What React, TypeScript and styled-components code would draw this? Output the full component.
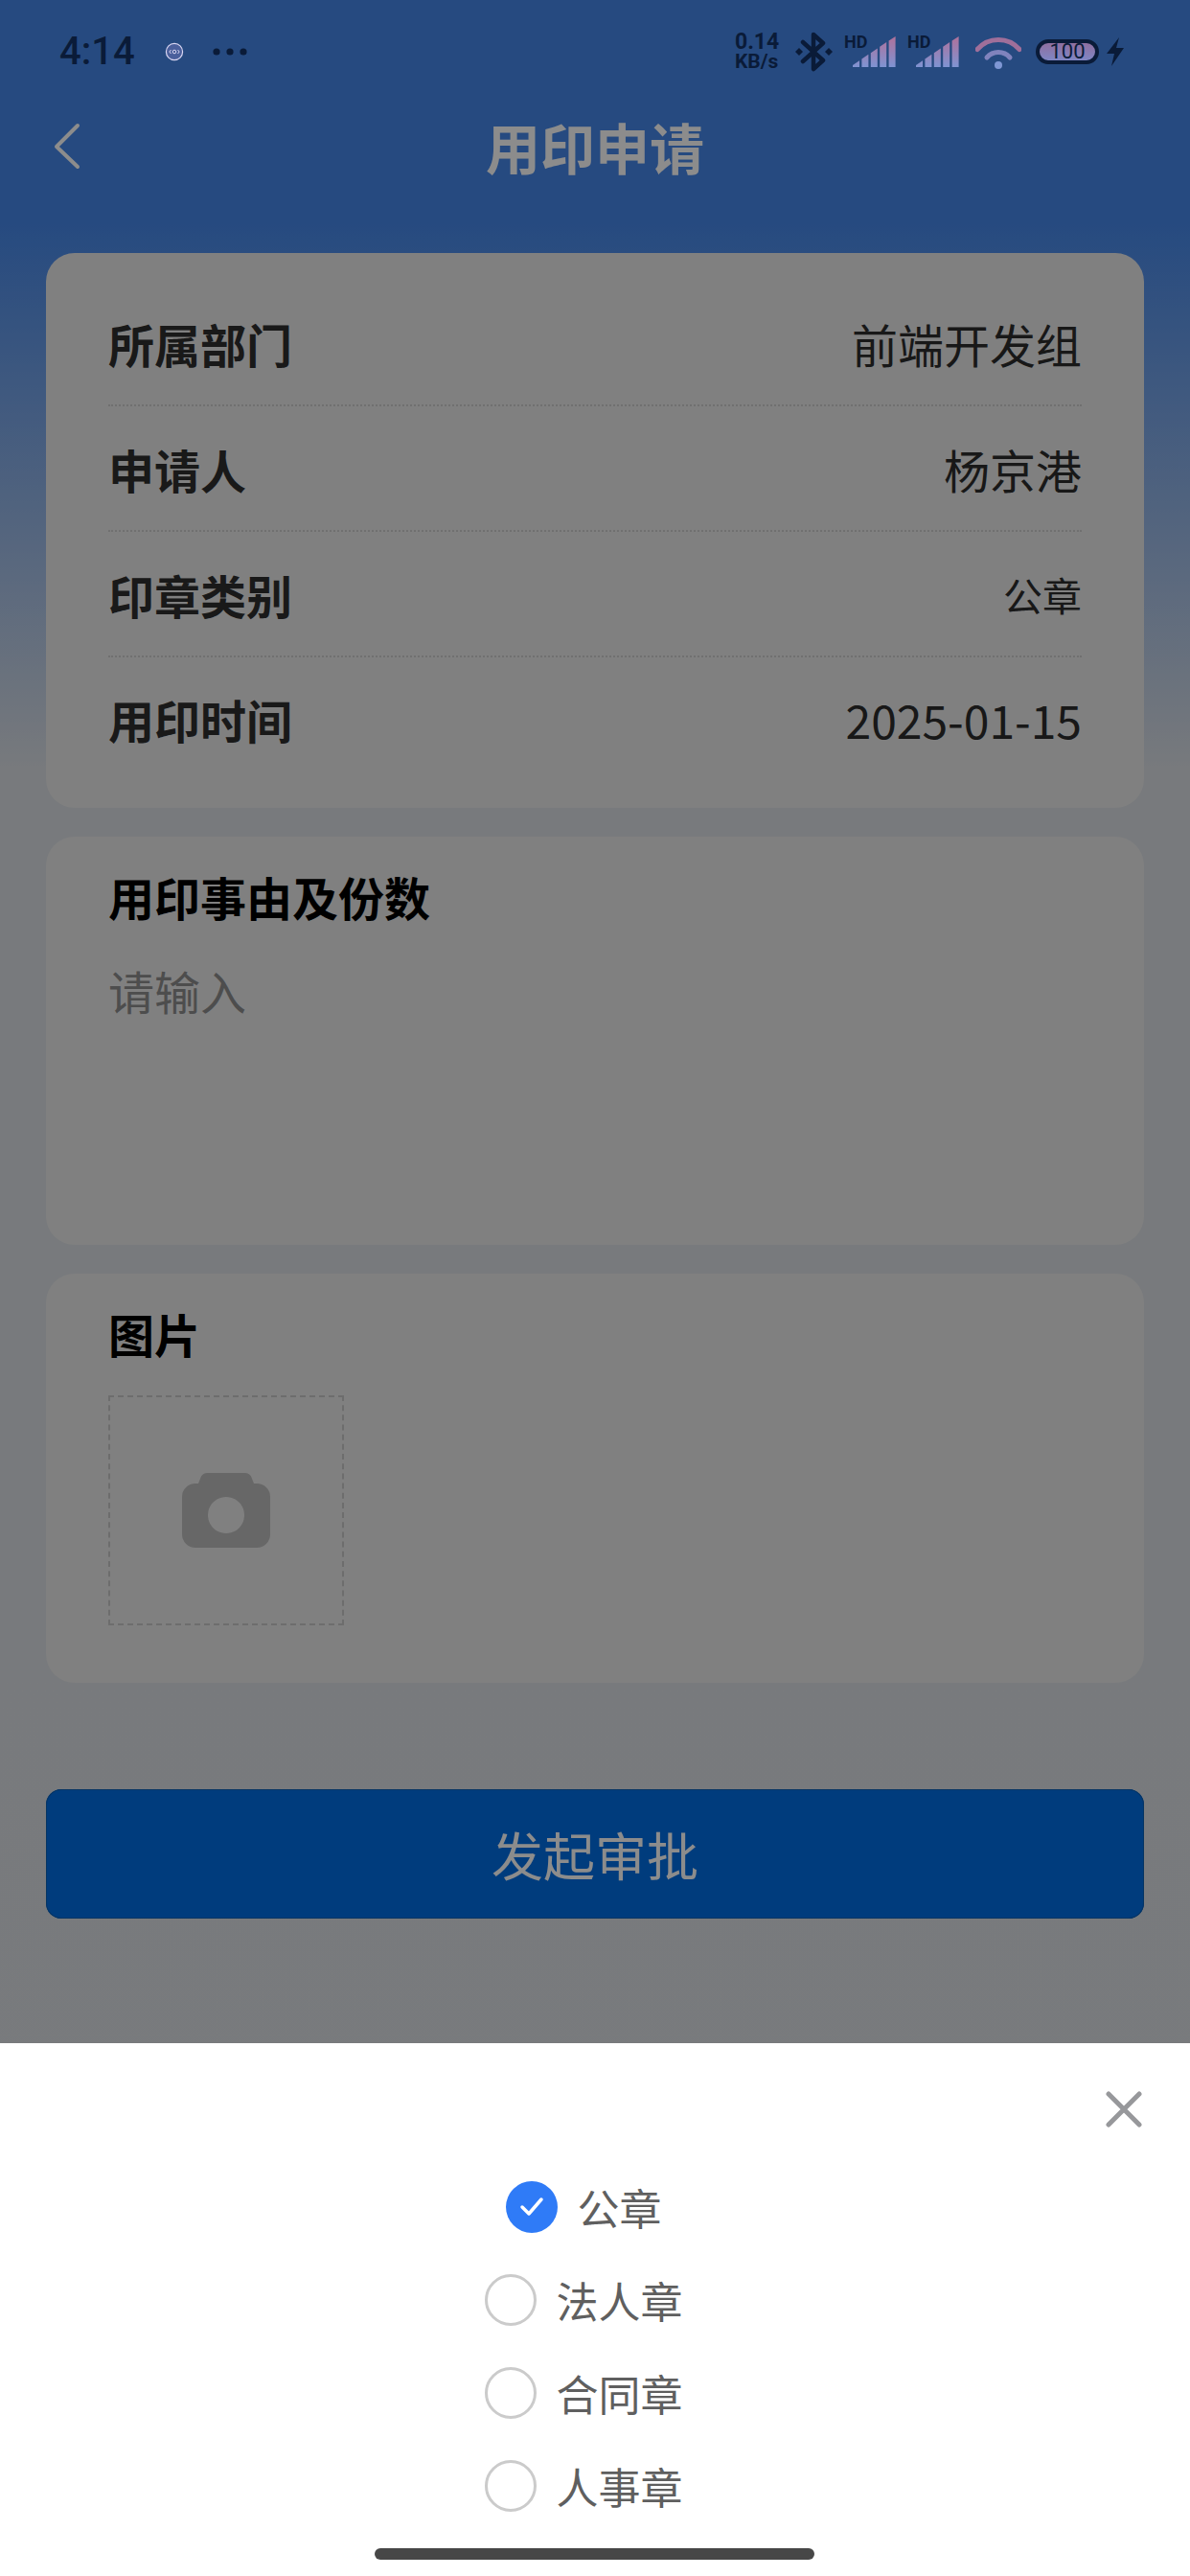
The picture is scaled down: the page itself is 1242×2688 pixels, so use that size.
import React from 'react'
import styled, { createGlobalStyle } from 'styled-components'

const GlobalStyle = createGlobalStyle`
  html, body {
    margin: 0;
    padding: 0;
    background: #dce0e3;
  }
  * {
    box-sizing: border-box;
  }
`

const STATUS_DARK = '#0a1b38'

/* page */
const Page = styled.div`
  position: relative;
  width: 1242px;
  height: 2688px;
  overflow: hidden;
  font-family: "Noto Sans CJK SC", "Noto Sans", sans-serif;
  background: linear-gradient(
    180deg,
    #4587e9 0,
    #4587e9 230px,
    #dadee3 800px,
    #dce0e3 100%
  );
`

const Scrim = styled.div`
  position: absolute;
  inset: 0;
  z-index: 1;
  background: rgba(0, 0, 0, 0.45);
`

/* status bar */
const StatusBar = styled.div`
  position: relative;
  z-index: 2;
  display: flex;
  align-items: center;
  justify-content: space-between;
  height: 108px;
  padding: 0 68px 0 62px;
  color: ${STATUS_DARK};
`

const StatusLeft = styled.div`
  display: flex;
  align-items: center;
`

const Time = styled.span`
  font-family: Roboto, sans-serif;
  font-size: 40px;
  font-weight: 500;
  line-height: 40px;
  margin-right: 31px;
`

const StatusRight = styled.div`
  display: flex;
  align-items: center;
`

const Speed = styled.div`
  display: flex;
  flex-direction: column;
  align-items: flex-start;
  width: 53px;
  margin-right: 10px;
  font-family: Roboto, sans-serif;
  font-weight: 700;
  font-size: 21px;
  line-height: 20px;
`

const SpeedValue = styled.span`
  font-size: 23px;
`

const SignalWrap = styled.span<{ $gap: number }>`
  position: relative;
  display: block;
  width: 54px;
  height: 32px;
  margin-right: ${p => p.$gap}px;
`

const SignalHd = styled.span`
  position: absolute;
  top: -2px;
  left: 0;
  font-family: Roboto, sans-serif;
  font-size: 18px;
  line-height: 16px;
  font-weight: 700;
`

const Battery = styled.span`
  display: flex;
  align-items: center;
  justify-content: center;
  width: 66px;
  height: 26px;
  margin: 0 7px 0 15px;
  border: 4px solid ${STATUS_DARK};
  border-radius: 13px;
  background: linear-gradient(180deg, #8f6f9f, #7f86c4);
  font-family: Roboto, sans-serif;
  font-size: 22px;
  line-height: 18px;
`

/* nav */
const NavBar = styled.div`
  position: relative;
  display: flex;
  align-items: center;
  justify-content: center;
  height: 92px;
  padding-bottom: 5px;
`

const BackIcon = styled.svg`
  position: absolute;
  left: 55px;
  top: 20px;
`

const NavTitle = styled.h1`
  margin: 0;
  font-size: 57px;
  line-height: 80px;
  font-weight: 700;
  color: #fff;
`

/* content */
const Content = styled.div`
  display: flex;
  flex-direction: column;
  gap: 30px;
  padding: 64px 48px 0;
`

const Card = styled.section<{ $height: number }>`
  display: flex;
  flex-direction: column;
  height: ${p => p.$height}px;
  padding: 30px 65px 0;
  background: #e9e9e9;
  border-radius: 30px;
`

const InfoCard = styled(Card)`
  padding-top: 29px;
`

const Row = styled.div`
  display: flex;
  align-items: center;
  justify-content: space-between;
  height: 131px;
  border-bottom: 2px dotted #cdcdcd;

  &:last-child {
    height: 127px;
    border-bottom: 0;
  }
`

const RowLabel = styled.span`
  font-size: 48px;
  font-weight: 700;
  color: #2f2f2f;
`

const RowValue = styled.span<{ $small?: boolean }>`
  font-size: ${p => (p.$small ? 41 : 48)}px;
  color: #2c2c2c;
`

const CardTitle = styled.h2`
  margin: 0;
  font-size: 48px;
  line-height: 64px;
  font-weight: 700;
  color: #000;
`

const Placeholder = styled.div`
  margin-top: 34px;
  font-size: 48px;
  line-height: 64px;
  color: #8c8c8c;
`

const UploadBox = styled.div`
  display: flex;
  align-items: center;
  justify-content: center;
  width: 246px;
  height: 240px;
  margin-top: 33px;
  border: 2px dashed #c6c6c6;
`

const SubmitButton = styled.button`
  display: block;
  width: 100%;
  height: 135px;
  margin-top: 81px;
  padding: 0;
  border: 0;
  border-radius: 16px;
  background: #006de3;
  box-shadow: inset 0 0 0 1px #0a5fb5;
  font-family: inherit;
  font-size: 54px;
  color: #fff;
`

/* bottom sheet */
const Sheet = styled.div`
  position: absolute;
  left: 0;
  right: 0;
  bottom: 0;
  z-index: 2;
  display: flex;
  flex-direction: column;
  height: 556px;
  padding: 50px 50px 0;
  background: #fff;
`

const CloseRow = styled.div`
  display: flex;
  justify-content: flex-end;
  height: 38px;
  margin-bottom: 56px;
`

const OptionList = styled.div`
  display: flex;
  flex-direction: column;
  align-items: center;
  gap: 43px;
  padding-right: 24px;
`

const Option = styled.label`
  display: flex;
  align-items: center;
  gap: 21px;
  height: 54px;
  font-size: 44px;
  line-height: 54px;
  color: #5f5f5f;
`

const Radio = styled.span<{ $checked?: boolean }>`
  display: flex;
  align-items: center;
  justify-content: center;
  width: 54px;
  height: 54px;
  border-radius: 50%;
  border: ${p => (p.$checked ? '0' : '3px solid #cbcbcb')};
  background: ${p => (p.$checked ? '#2f7bf7' : '#fff')};
`

const HomeBar = styled.div`
  position: absolute;
  left: 391px;
  bottom: 17px;
  width: 459px;
  height: 12px;
  border-radius: 6px;
  background: #474747;
`

const rows = [
  { label: '所属部门', value: '前端开发组' },
  { label: '申请人', value: '杨京港' },
  { label: '印章类别', value: '公章', small: true },
  { label: '用印时间', value: '2025-01-15' },
]

const options = ['公章', '法人章', '合同章', '人事章']

const barPoints = [0, 1, 2, 3, 4].map(i => {
  const x0 = 9 + i * 9.4
  const x1 = x0 + 7
  const top = (x: number) => Math.max(0, 32 - (x - 6) * 0.68)
  return `${x0},32 ${x0},${top(x0)} ${x1},${top(x1)} ${x1},32`
})

const Signal = ({ id, gap }: { id: string; gap: number }) => (
  <SignalWrap $gap={gap}>
    <SignalHd>HD</SignalHd>
    <svg width="54" height="32" viewBox="0 0 54 32">
      <defs>
        <linearGradient id={id} x1="0" y1="0" x2="0" y2="32" gradientUnits="userSpaceOnUse">
          <stop offset="0" stopColor="#b0719a" />
          <stop offset="1" stopColor="#7f93d2" />
        </linearGradient>
      </defs>
      {barPoints.map(p => (
        <polygon key={p} points={p} fill={`url(#${id})`} />
      ))}
    </svg>
  </SignalWrap>
)

const App: React.FC = () => {
  return (
    <Page>
      <GlobalStyle />
      <StatusBar>
        <StatusLeft>
          <Time>4:14</Time>
          <svg width="20" height="20" viewBox="0 0 20 20" style={{ marginRight: 30 }}>
            <circle cx="10" cy="10" r="8.6" fill="#4a5f9c" stroke="#d9d6f2" strokeWidth="1.2" />
            <path d="M6.500 8 4.800 10 6.500 12M13.500 8l1.700 2-1.700 2" fill="none" stroke="#d9d6f2" strokeWidth="1" />
            <circle cx="10" cy="10" r="1.800" fill="none" stroke="#d9d6f2" strokeWidth="1" />
          </svg>
          <svg width="36" height="8" viewBox="0 0 36 8">
            <circle cx="4" cy="4" r="3.600" fill={STATUS_DARK} />
            <circle cx="18" cy="4" r="3.600" fill={STATUS_DARK} />
            <circle cx="32" cy="4" r="3.600" fill={STATUS_DARK} />
          </svg>
        </StatusLeft>
        <StatusRight>
          <Speed>
            <SpeedValue>0.14</SpeedValue>
            <span>KB/s</span>
          </Speed>
          <svg width="39" height="42" viewBox="0 0 39 42" style={{ marginRight: 12 }}>
            <polyline
              points="8,11 29,30 19,39 19,3 29,12 8,31"
              fill="none"
              stroke={STATUS_DARK}
              strokeWidth="4.500"
              strokeLinejoin="round"
              strokeLinecap="round"
            />
            <polygon points="4,17 8,21 4,25 0,21" fill={STATUS_DARK} />
            <polygon points="35,17 39,21 35,25 31,21" fill={STATUS_DARK} />
          </svg>
          <Signal id="sig-a" gap={12} />
          <Signal id="sig-b" gap={17} />
          <svg width="48" height="35" viewBox="0 0 48 35">
            <path d="M2 14.500A29 29 0 0 1 46 14.500" fill="none" stroke="#a06f9a" strokeWidth="5" strokeLinecap="round" />
            <path d="M12 23A16 16 0 0 1 36 23" fill="none" stroke="#8083bd" strokeWidth="5" strokeLinecap="round" />
            <circle cx="24" cy="31" r="4" fill="#7f97d4" />
          </svg>
          <Battery>100</Battery>
          <svg width="20" height="30" viewBox="0 0 20 30">
            <polygon points="14,0 1,17 9,17 6,30 19,11 11,11" fill={STATUS_DARK} />
          </svg>
        </StatusRight>
      </StatusBar>

      <NavBar>
        <BackIcon width="30" height="50" viewBox="0 0 30 50">
          <polyline
            points="26,3 4,25 26,46"
            fill="none"
            stroke="#fff"
            strokeWidth="4"
            strokeLinecap="round"
            strokeLinejoin="round"
          />
        </BackIcon>
        <NavTitle>用印申请</NavTitle>
      </NavBar>

      <Content>
        <InfoCard $height={579}>
          {rows.map(r => (
            <Row key={r.label}>
              <RowLabel>{r.label}</RowLabel>
              <RowValue $small={r.small}>{r.value}</RowValue>
            </Row>
          ))}
        </InfoCard>

        <Card $height={426}>
          <CardTitle>用印事由及份数</CardTitle>
          <Placeholder>请输入</Placeholder>
        </Card>

        <Card $height={427}>
          <CardTitle>图片</CardTitle>
          <UploadBox>
            <svg width="92" height="78" viewBox="0 0 92 78">
              <path
                fillRule="evenodd"
                fill="#bcbcbc"
                d="M26 0H66a8 8 0 0 1 7 6l2 5H78a14 14 0 0 1 14 14V64a14 14 0 0 1-14 14H14A14 14 0 0 1 0 64V25A14 14 0 0 1 14 11H17l2-5a8 8 0 0 1 7-6ZM46 25a19 19 0 1 0 .01 0Z"
              />
            </svg>
          </UploadBox>
        </Card>

        <SubmitButton>发起审批</SubmitButton>
      </Content>

      <Scrim />

      <Sheet>
        <CloseRow>
          <svg width="38" height="38" viewBox="0 0 38 38">
            <path d="M3 3 35 35M35 3 3 35" fill="none" stroke="#97989b" strokeWidth="5" strokeLinecap="round" />
          </svg>
        </CloseRow>
        <OptionList>
          {options.map((o, i) => (
            <Option key={o}>
              <Radio $checked={i === 0}>
                {i === 0 && (
                  <svg width="26" height="22" viewBox="0 0 26 22">
                    <polyline
                      points="3,11 10,18 23,3"
                      fill="none"
                      stroke="#fff"
                      strokeWidth="3.500"
                      strokeLinecap="round"
                      strokeLinejoin="round"
                    />
                  </svg>
                )}
              </Radio>
              {o}
            </Option>
          ))}
        </OptionList>
        <HomeBar />
      </Sheet>
    </Page>
  )
}

export default App
